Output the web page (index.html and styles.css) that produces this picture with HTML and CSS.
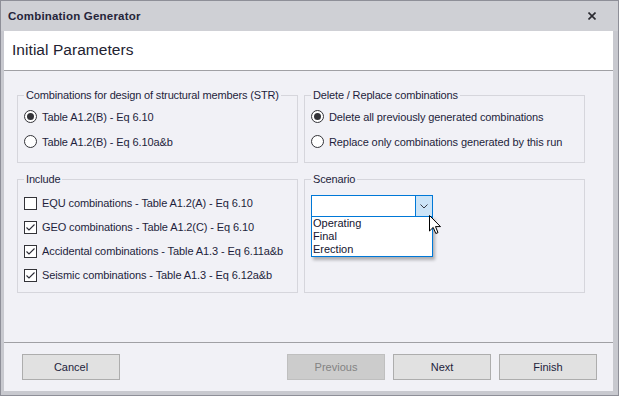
FILE: index.html
```html
<!DOCTYPE html>
<html>
<head>
<meta charset="utf-8">
<link rel="stylesheet" href="styles.css">
</head>
<body>
<div class="window">
  <div class="titlebar">
    <span class="title">Combination Generator</span>
    <svg class="close" width="8" height="8" viewBox="0 0 8 8"><path d="M0.5 0.5 L7.5 7.5 M7.5 0.5 L0.5 7.5" stroke="#2a2a30" stroke-width="1.6" fill="none"/></svg>
  </div>
  <div class="client">
    <div class="header">Initial Parameters</div>
    <div class="content">
      <fieldset class="group">
        <legend>Combinations for design of structural members (STR)</legend>
        <div class="opt"><span class="radio checked"></span>Table A1.2(B) - Eq 6.10</div>
        <div class="opt"><span class="radio"></span>Table A1.2(B) - Eq 6.10a&amp;b</div>
      </fieldset>
      <fieldset class="group">
        <legend>Delete / Replace combinations</legend>
        <div class="opt"><span class="radio checked"></span>Delete all previously generated combinations</div>
        <div class="opt"><span class="radio"></span>Replace only combinations generated by this run</div>
      </fieldset>
      <fieldset class="group include">
        <legend>Include</legend>
        <div class="opt"><span class="check"></span>EQU combinations - Table A1.2(A) - Eq 6.10</div>
        <div class="opt"><span class="check"><svg width="11" height="11" viewBox="0 0 11 11"><path d="M1.5 5.5 L4 8 L9.5 2.5" stroke="#2a2a35" stroke-width="1.1" fill="none"/></svg></span>GEO combinations - Table A1.2(C) - Eq 6.10</div>
        <div class="opt"><span class="check"><svg width="11" height="11" viewBox="0 0 11 11"><path d="M1.5 5.5 L4 8 L9.5 2.5" stroke="#2a2a35" stroke-width="1.1" fill="none"/></svg></span>Accidental combinations - Table A1.3 - Eq 6.11a&amp;b</div>
        <div class="opt"><span class="check"><svg width="11" height="11" viewBox="0 0 11 11"><path d="M1.5 5.5 L4 8 L9.5 2.5" stroke="#2a2a35" stroke-width="1.1" fill="none"/></svg></span>Seismic combinations - Table A1.3 - Eq 6.12a&amp;b</div>
      </fieldset>
      <fieldset class="group scenario">
        <legend>Scenario</legend>
        <div class="combo">
          <div class="combo-btn"><svg width="8" height="5" viewBox="0 0 8 5"><path d="M0.5 0.5 L4 4 L7.5 0.5" stroke="#3a3a44" stroke-width="1" fill="none"/></svg></div>
          <div class="droplist">
            <div class="item">Operating</div>
            <div class="item">Final</div>
            <div class="item">Erection</div>
          </div>
          <svg class="cursor" width="13" height="20" viewBox="0 0 13 20"><path d="M0.5 0.5 L0.5 16 L4.2 12.4 L6.8 18.5 L9 17.6 L6.5 11.6 L11.5 11.6 Z" fill="#fff" stroke="#000" stroke-width="1" stroke-linejoin="round"/></svg>
        </div>
      </fieldset>
    </div>
    <div class="footer">
      <div class="button cancel">Cancel</div>
      <div class="button disabled">Previous</div>
      <div class="button">Next</div>
      <div class="button">Finish</div>
    </div>
  </div>
</div>
</body>
</html>
```
FILE: styles.css
```css
* { box-sizing: border-box; }
html, body { margin: 0; padding: 0; }
body {
  width: 619px;
  height: 396px;
  overflow: hidden;
  font-family: "Liberation Sans", Arial, sans-serif;
  font-size: 11px;
  color: #1e1e3c;
}
.window {
  width: 619px;
  height: 396px;
  background: #c8c9cf;
  border: 1px solid #8e8f98;
  display: flex;
  flex-direction: column;
}
.titlebar {
  height: 30px;
  flex: none;
  background: #cfd0d5;
  display: flex;
  align-items: center;
  justify-content: space-between;
  padding: 0 22px 0 7px;
}
.title {
  font-weight: bold;
  font-size: 11.5px;
  letter-spacing: 0.2px;
  color: #25253a;
}
.close { display: block; }
.client {
  flex: 1;
  margin: 0 5px 4px 3px;
  background: #f1f1f6;
  display: flex;
  flex-direction: column;
  min-height: 0;
}
.header {
  height: 40px;
  flex: none;
  background: #fff;
  border-bottom: 1px solid #a0a0a4;
  padding: 10px 8px 0;
  font-size: 15.5px;
  line-height: 18px;
  color: #222230;
  letter-spacing: 0.05px;
}
.content {
  flex: 1;
  display: grid;
  grid-template-columns: 281px 281px;
  grid-template-rows: 75px 121px;
  column-gap: 6px;
  row-gap: 9px;
  padding: 17px 0 0 13px;
  align-content: start;
}
.group {
  margin: 0;
  min-width: 0;
  border: 1px solid #d6d6dc;
  padding: 1px 6px 0 6px;
}
.group legend {
  padding: 0 2px;
  line-height: 15px;
  letter-spacing: -0.15px;
  white-space: nowrap;
}
.opt {
  display: flex;
  align-items: center;
  height: 25px;
  white-space: nowrap;
  letter-spacing: -0.1px;
}
.include { padding-top: 4px; }
.include .opt { height: 24px; }
.radio {
  width: 13px;
  height: 13px;
  border: 1px solid #333338;
  border-radius: 50%;
  background: #fff;
  margin-right: 5px;
  flex: none;
  display: flex;
  align-items: center;
  justify-content: center;
}
.radio.checked::after {
  content: "";
  width: 7px;
  height: 7px;
  border-radius: 50%;
  background: #333338;
}
.check {
  width: 13px;
  height: 13px;
  border: 1px solid #333338;
  background: #fff;
  margin-right: 5px;
  flex: none;
  display: flex;
}
.check svg { display: block; }
.combo {
  position: relative;
  margin-top: 7px;
  width: 122px;
  height: 22px;
  border: 1px solid #0078d7;
  background: #fff;
  display: flex;
  justify-content: flex-end;
}
.combo-btn {
  width: 17px;
  height: 100%;
  background: #cce4f7;
  border-left: 1px solid #0078d7;
  display: flex;
  align-items: center;
  justify-content: center;
}
.combo-btn svg { display: block; }
.droplist {
  position: absolute;
  left: -1px;
  top: 20px;
  width: 122px;
  border: 1px solid #0078d7;
  background: #fff;
  box-shadow: 2px 3px 3px rgba(0, 0, 0, 0.28);
}
.item {
  line-height: 13px;
  padding-left: 1px;
  font-size: 11px;
  color: #141430;
}
.cursor {
  position: absolute;
  left: 117px;
  top: 19px;
  display: block;
}
.footer {
  height: 49px;
  flex: none;
  border-top: 1px solid #a0a0a4;
  display: flex;
  align-items: center;
  gap: 8px;
  padding: 0 16px 0 18px;
}
.button {
  width: 98px;
  height: 26px;
  border: 1px solid #adadad;
  background: #e1e1e1;
  display: flex;
  align-items: center;
  justify-content: center;
  color: #1e1e3c;
}
.cancel { margin-right: auto; }
.button.disabled {
  background: #cccccc;
  border-color: #bfbfbf;
  color: #838383;
}
```
